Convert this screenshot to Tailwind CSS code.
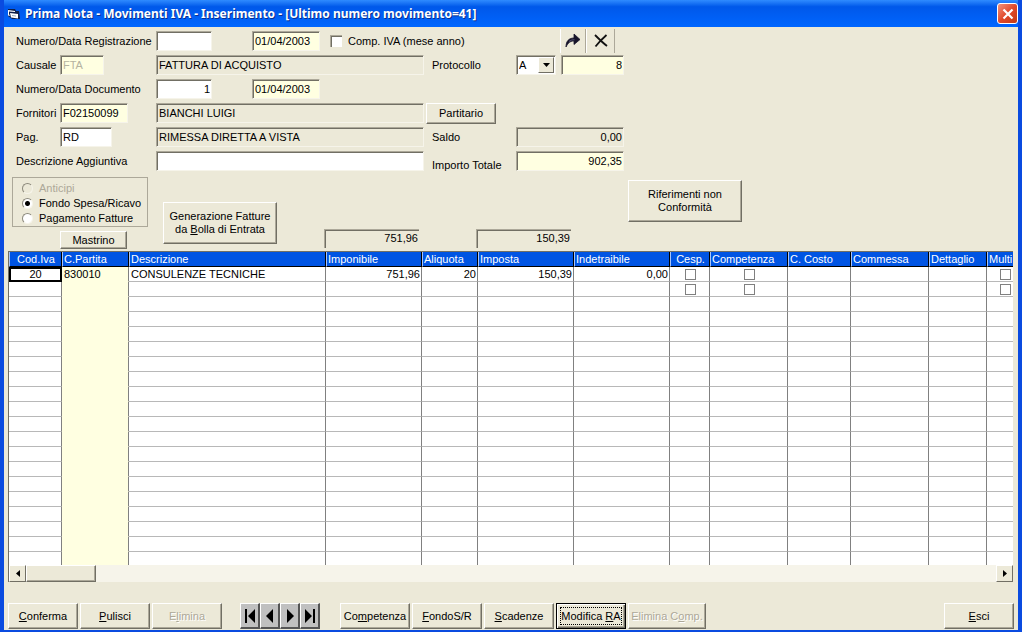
<!DOCTYPE html>
<html lang="it">
<head>
<meta charset="utf-8">
<title>Prima Nota - Movimenti IVA</title>
<script src="https://cdn.jsdelivr.net/npm/@tailwindcss/browser@4"></script>
</head>
<body class="flex min-h-screen flex-col border-x-4 border-b-2 border-[#0a4be0] bg-[#ece9d8] font-['Liberation_Sans',Arial,sans-serif] text-[11px] leading-3 text-black
 [&_button]:flex [&_button]:shrink-0 [&_button]:items-center [&_button]:justify-center [&_button]:whitespace-nowrap [&_button]:text-center
 [&_input]:shrink-0 [&_input]:outline-none [&_label]:shrink-0 [&_label]:whitespace-nowrap">

<header class="-mx-1 flex h-[27px] shrink-0 items-center bg-linear-to-b from-[#2f8bff] via-[#0058ea] via-25% to-[#0066ff] pl-2 pr-1">
  <svg class="mr-[5px] h-3 w-3 shrink-0" viewBox="0 0 12 12" aria-hidden="true">
    <path d="M0 1h7l1 2h3l1 8H4l-1-1L0 8z" fill="#10204a"/>
    <path d="M0 2l7 1v1L1 3.500V6l1 2-2-.500z" fill="#fff"/>
    <path d="M2 5l8 1v4.500L3 9.500z" fill="#fff"/>
    <path d="M4 7l4 .500v1L4 8z" fill="#9ab"/>
  </svg>
  <h1 class="grow whitespace-nowrap font-['Noto_Sans',sans-serif] text-[12px] font-bold leading-4 text-white [text-shadow:1px_1px_0_#0a2f8f]">Prima Nota - Movimenti IVA - Inserimento - [Ultimo numero movimento=41]</h1>
  <button type="button" aria-label="Chiudi" class="h-[21px] w-[21px] rounded-[3px] border border-white bg-linear-to-br from-[#f0907a] via-[#e0492a] to-[#c33a12]">
    <svg class="h-3 w-3" viewBox="0 0 12 12"><path d="M1.5 1.5l9 9M10.500 1.500l-9 9" stroke="#fff" stroke-width="2.200"/></svg>
  </button>
</header>

<main class="flex grow flex-col">
  <form class="flex flex-col gap-1 pl-3 pt-1
   [&_.f]:h-5 [&_.f]:border [&_.f]:border-l-[#aca899] [&_.f]:border-t-[#aca899] [&_.f]:border-r-[#f6f4ea] [&_.f]:border-b-[#f6f4ea] [&_.f]:pl-[2px] [&_.f]:pr-[1px] [&_.f]:pb-[1px] [&_.f]:shadow-[inset_1px_1px_0_#716f64]">
    <div class="flex h-5 items-center">
      <label for="nreg" class="w-[140px]">Numero/Data Registrazione</label>
      <input id="nreg" class="f w-14 bg-white">
      <input aria-label="Data registrazione" value="01/04/2003" class="f ml-10 w-[68px] bg-[#ffffe1]">
      <input id="comp" type="checkbox" class="ml-[10px] h-3 w-3 appearance-none border-l border-t border-[#aca899] bg-white shadow-[inset_1px_1px_0_#716f64]">
      <label for="comp" class="ml-[6px] w-[212px]">Comp. IVA (mese anno)</label>
      <button type="button" aria-label="Conferma riga" class="h-6 w-[26px] border-l border-r border-l-white border-r-[#aca899]">
        <svg class="h-4 w-4" viewBox="0 0 16 16"><path d="M1 14C1 8 4 5 9 5V1l6 5.500-6 5V8C5 8 3 10 1 14z" fill="#16142a" stroke="#16142a" stroke-width=".8"/><path d="M4 8.500C6 7 7 6.800 9.500 6.800" fill="none" stroke="#66668a" stroke-width=".8"/></svg>
      </button>
      <button type="button" aria-label="Annulla riga" class="h-6 w-[29px] border-l border-r border-l-white border-r-[#aca899]">
        <svg class="h-[14px] w-[14px]" viewBox="0 0 14 14"><path d="M1 1C5 5 9 9 13 12M12.500 1C8 5 5 8 1.500 12.500" fill="none" stroke="#111" stroke-width="1.800"/></svg>
      </button>
    </div>
    <div class="flex h-5 items-center">
      <label for="caus" class="w-11">Causale</label>
      <input id="caus" disabled value="FTA" class="f mr-[52px] w-11 bg-[#ffffe1] text-[#b5b3a0]">
      <input aria-label="Descrizione causale" readonly value="FATTURA DI ACQUISTO" class="f w-[268px] bg-[#ece9d8]">
      <label for="prot" class="ml-2 w-[84px]">Protocollo</label>
      <span class="relative mr-[5px] flex w-10">
        <select id="prot" class="f w-10 appearance-none bg-white"><option>A</option></select>
        <span class="pointer-events-none absolute right-[2px] top-[2px] flex h-4 w-4 items-center justify-center border border-b-[#716f64] border-l-white border-r-[#716f64] border-t-white bg-[#ece9d8]"><svg class="h-1 w-[7px]" viewBox="0 0 7 4"><path d="M0 0h7L3.500 4z"/></svg></span>
      </span>
      <input aria-label="Numero protocollo" value="8" class="f w-[63px] bg-[#ffffe1] text-right">
    </div>
    <div class="flex h-5 items-center">
      <label for="ndoc" class="w-[140px]">Numero/Data Documento</label>
      <input id="ndoc" value="1" class="f w-14 bg-white text-right">
      <input aria-label="Data documento" value="01/04/2003" class="f ml-10 w-[68px] bg-[#ffffe1]">
    </div>
    <div class="flex h-5 items-center">
      <label for="forn" class="w-11">Fornitori</label>
      <input id="forn" value="F02150099" class="f mr-7 w-[68px] bg-[#ffffe1]">
      <input aria-label="Nome fornitore" readonly value="BIANCHI LUIGI" class="f w-[268px] bg-[#ece9d8]">
      <button type="button" class="ml-[2px] h-[21px] w-[70px] border border-b-[#716f64] border-l-white border-r-[#716f64] border-t-white shadow-[inset_-1px_-1px_0_#aca899]">Partitario</button>
    </div>
    <div class="flex h-5 items-center">
      <label for="pag" class="w-11">Pag.</label>
      <input id="pag" value="RD" class="f mr-11 w-[52px] bg-white">
      <input aria-label="Descrizione pagamento" readonly value="RIMESSA DIRETTA A VISTA" class="f w-[268px] bg-[#ece9d8]">
      <label for="saldo" class="ml-2 w-[84px]">Saldo</label>
      <input id="saldo" readonly value="0,00" class="f w-[108px] bg-[#ece9d8] text-right">
    </div>
    <div class="flex h-5 items-center">
      <label for="agg" class="w-[140px]">Descrizione Aggiuntiva</label>
      <input id="agg" class="f w-[268px] bg-white">
      <label for="tot" class="ml-2 w-[84px] pt-2">Importo Totale</label>
      <input id="tot" value="902,35" class="f w-[108px] bg-[#ffffe1] text-right">
    </div>
  </form>

  <section class="flex h-20 shrink-0 items-end pl-2
   [&_.r]:h-[11px] [&_.r]:w-[11px] [&_.r]:appearance-none [&_.r]:rounded-full [&_.r]:border [&_.r]:border-b-[#f6f4ea] [&_.r]:border-l-[#8c897c] [&_.r]:border-r-[#f6f4ea] [&_.r]:border-t-[#8c897c]">
    <div class="flex h-[74px] w-[136px] shrink-0 flex-col">
      <fieldset class="flex h-[50px] flex-col justify-center gap-[3px] border border-[#aca899] pl-[9px] pt-1">
        <label class="flex items-center gap-[6px] text-[#aca899]"><input type="radio" name="tipo" disabled class="r bg-[#ece9d8]">Anticipi</label>
        <label class="flex items-center gap-[6px]"><input type="radio" name="tipo" checked class="r bg-white bg-[radial-gradient(circle,#000_2px,#fff_3px)]">Fondo Spesa/Ricavo</label>
        <label class="flex items-center gap-[6px]"><input type="radio" name="tipo" class="r bg-white">Pagamento Fatture</label>
      </fieldset>
      <button type="button" class="ml-12 mt-1 h-[18px] w-[67px] border border-b-[#716f64] border-l-white border-r-[#716f64] border-t-white shadow-[inset_-1px_-1px_0_#aca899]">Mastrino</button>
    </div>
    <button type="button" class="mb-[7px] ml-[15px] h-[42px] w-[114px] border border-b-[#716f64] border-l-white border-r-[#716f64] border-t-white leading-[13px] shadow-[inset_-1px_-1px_0_#aca899]"><span>Generazione Fatture<br>da <u>B</u>olla di Entrata</span></button>
    <input aria-label="Totale imponibile" readonly value="751,96" class="mb-[3px] ml-[47px] h-[19px] w-[95px] border-l border-t border-[#aca899] pb-[2px] pr-[1px] text-right shadow-[inset_1px_1px_0_#716f64]">
    <input aria-label="Totale imposta" readonly value="150,39" class="mb-[3px] ml-[57px] h-[19px] w-[95px] border-l border-t border-[#aca899] pb-[2px] pr-[1px] text-right shadow-[inset_1px_1px_0_#716f64]">
    <button type="button" class="mb-[29px] ml-[57px] h-[42px] w-[114px] border border-b-[#716f64] border-l-white border-r-[#716f64] border-t-white leading-[13px] shadow-[inset_-1px_-1px_0_#aca899]"><span>Riferimenti non<br>Conformità</span></button>
  </section>

  <section class="ml-1 mr-[5px] flex flex-col border-l border-t border-[#716f64]">
    <div class="h-[313px] overflow-hidden bg-white">
      <table class="w-full table-fixed border-separate border-spacing-0
       [&_th]:h-[15px] [&_th]:overflow-hidden [&_th]:whitespace-nowrap [&_th]:border-b [&_th]:border-l [&_th]:border-r [&_th]:border-b-black [&_th]:border-l-[#a8c4f8] [&_th]:border-r-black [&_th]:bg-[#0054e3] [&_th]:p-0 [&_th]:pl-[1px] [&_th]:text-left [&_th]:font-normal [&_th]:text-white
       [&_td]:h-[15px] [&_td]:overflow-hidden [&_td]:whitespace-nowrap [&_td]:border-b [&_td]:border-r [&_td]:border-b-[#b8b8b8] [&_td]:border-r-[#808080] [&_td]:py-0 [&_td]:pl-[2px] [&_td]:pr-[1px]
       [&_td:nth-child(2)]:border-b-[#ffffe1] [&_td:nth-child(2)]:bg-[#ffffe1] [&_td:last-child]:border-r-0 [&_th:last-child]:border-r-0
       [&_input]:mx-auto [&_input]:block [&_input]:h-[11px] [&_input]:w-[11px] [&_input]:appearance-none [&_input]:border [&_input]:border-[#808080]">
        <colgroup><col class="w-[53px]"><col class="w-[67px]"><col class="w-[197px]"><col class="w-[96px]"><col class="w-14"><col class="w-24"><col class="w-24"><col class="w-10"><col class="w-[78px]"><col class="w-[63px]"><col class="w-[78px]"><col class="w-[58px]"><col></colgroup>
        <thead><tr><th><span class="block text-center">Cod.Iva</span></th><th>C.Partita</th><th>Descrizione</th><th>Imponibile</th><th>Aliquota</th><th>Imposta</th><th>Indetraibile</th><th><span class="block text-center">Cesp.</span></th><th>Competenza</th><th>C. Costo</th><th>Commessa</th><th>Dettaglio</th><th>Multi</th></tr></thead>
        <tbody id="righe">
          <tr><td class="text-center outline-2 -outline-offset-2 outline-black">20</td><td>830010</td><td>CONSULENZE TECNICHE</td><td class="text-right">751,96</td><td class="text-right">20</td><td class="text-right">150,39</td><td class="text-right">0,00</td><td><input type="checkbox" aria-label="Cesp. riga 1"></td><td><input type="checkbox" aria-label="Competenza riga 1"></td><td></td><td></td><td></td><td><span class="block pl-[10px]"><input type="checkbox" aria-label="Multi riga 1"></span></td></tr>
          <tr><td></td><td></td><td></td><td></td><td></td><td></td><td></td><td><input type="checkbox" aria-label="Cesp. riga 2"></td><td><input type="checkbox" aria-label="Competenza riga 2"></td><td></td><td></td><td></td><td><span class="block pl-[10px]"><input type="checkbox" aria-label="Multi riga 2"></span></td></tr>
        </tbody>
      </table>
    </div>
    <div class="flex h-[17px] bg-[#f6f4ea]">
      <button type="button" aria-label="Scorri a sinistra" class="w-[17px] border border-b-[#716f64] border-l-white border-r-[#716f64] border-t-white bg-[#ece9d8]"><svg class="h-[7px] w-1" viewBox="0 0 4 7"><path d="M4 0v7L0 3.500z"/></svg></button>
      <div class="w-[70px] border border-b-[#716f64] border-l-white border-r-[#716f64] border-t-white bg-[#ece9d8] shadow-[inset_-1px_-1px_0_#aca899]"></div>
      <div class="grow"></div>
      <button type="button" aria-label="Scorri a destra" class="w-[17px] border border-b-[#716f64] border-l-white border-r-[#716f64] border-t-white bg-[#ece9d8]"><svg class="h-[7px] w-1" viewBox="0 0 4 7"><path d="M0 0v7L4 3.500z"/></svg></button>
    </div>
  </section>

  <footer class="mt-auto flex pb-[1px] pl-1 pr-1
   [&_.b]:h-[26px] [&_.b]:border [&_.b]:border-b-[#716f64] [&_.b]:border-l-white [&_.b]:border-r-[#716f64] [&_.b]:border-t-white [&_.b]:shadow-[inset_-1px_-1px_0_#aca899]
   [&_.n]:h-[26px] [&_.n]:w-5 [&_.n]:border [&_.n]:border-r-2 [&_.n]:border-b-2 [&_.n]:border-b-[#555] [&_.n]:border-l-white [&_.n]:border-r-[#555] [&_.n]:border-t-white [&_.n]:bg-[#c0c0c0]">
    <button type="button" class="b w-[70px]"><span><u>C</u>onferma</span></button>
    <button type="button" class="b ml-[2px] w-[70px]"><span><u>P</u>ulisci</span></button>
    <button type="button" disabled class="b ml-[2px] w-[70px] text-[#aca899] [text-shadow:1px_1px_0_#fff]"><span>E<u>l</u>imina</span></button>
    <div class="ml-[18px] flex">
      <button type="button" aria-label="Primo" class="n"><svg class="h-[14px] w-3" viewBox="0 0 12 14"><path d="M1 0h2v14H1zM11 0v14L4 7z"/></svg></button>
      <button type="button" aria-label="Precedente" class="n"><svg class="h-[14px] w-3" viewBox="0 0 12 14"><path d="M9 0v14L2 7z"/></svg></button>
      <button type="button" aria-label="Successivo" class="n"><svg class="h-[14px] w-3" viewBox="0 0 12 14"><path d="M3 0v14l7-7z"/></svg></button>
      <button type="button" aria-label="Ultimo" class="n"><svg class="h-[14px] w-3" viewBox="0 0 12 14"><path d="M9 0h2v14H9zM1 0v14l7-7z"/></svg></button>
    </div>
    <button type="button" class="b ml-5 w-[70px]"><span>Co<u>m</u>petenza</span></button>
    <button type="button" class="b ml-[2px] w-[70px]"><span><u>F</u>ondoS/R</span></button>
    <button type="button" class="b ml-[2px] w-[70px]"><span><u>S</u>cadenze</span></button>
    <button type="button" class="ml-[2px] h-[26px] w-[70px] border border-black p-[3px] shadow-[inset_1px_1px_0_#fff,inset_-1px_-1px_0_#716f64,inset_-2px_-2px_0_#aca899]"><span class="flex h-full w-full items-center justify-center border border-dotted border-black"><span>Modifica <u>R</u>A</span></span></button>
    <button type="button" disabled class="b ml-[2px] w-[78px] text-[#aca899] [text-shadow:1px_1px_0_#fff]"><span>Elimina C<u>o</u>mp.</span></button>
    <button type="button" class="b ml-auto w-[70px]"><span><u>E</u>sci</span></button>
  </footer>
</main>
<script>
  // Fill the rest of the grid with blank rows.
  const body = document.getElementById('righe');
  for (let i = 0; i < 18; i++) {
    const row = body.insertRow();
    for (let c = 0; c < 13; c++) row.insertCell();
  }
</script>
</body>
</html>
